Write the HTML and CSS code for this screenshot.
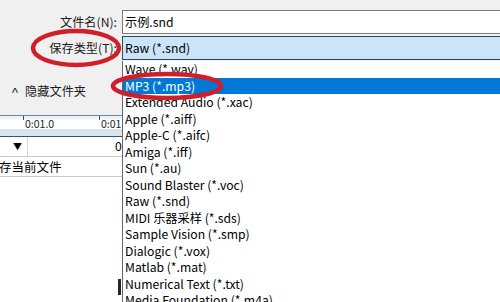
FILE: index.html
```html
<!DOCTYPE html>
<html>
<head>
  <meta charset="UTF-8">
  <title>保存文件</title>
  <link rel="stylesheet" href="styles.css">
</head>
<body>
  <div class="form">
    <div class="form-row">
      <label class="form-label">文件名(N):</label>
      <div class="text-field">示例.snd</div>
    </div>
    <div class="form-row">
      <label class="form-label">保存类型(T):</label>
      <div class="combo">Raw (*.snd)</div>
    </div>
  </div>

  <div class="folder-toggle">
    <span class="caret">^</span>
    <span>隐藏文件夹</span>
  </div>

  <div class="editor">
    <div class="ruler">
      <span class="tick">0:01.0</span>
      <span class="tick">0:01</span>
    </div>
    <div class="ruler-band"></div>
    <div class="track-row">
      <div class="track-arrow">▼</div>
      <div class="track-time">0</div>
    </div>
    <div class="track-row">
      <div class="track-name">存当前文件</div>
    </div>
    <div class="editor-rest">
      <div class="scroll-mark"></div>
    </div>
  </div>

  <!-- 下拉列表 -->
  <ul class="dropdown">
    <li>Wave (*.wav)</li>
    <li class="selected">MP3 (*.mp3)</li>
    <li>Extended Audio (*.xac)</li>
    <li>Apple (*.aiff)</li>
    <li>Apple-C (*.aifc)</li>
    <li>Amiga (*.iff)</li>
    <li>Sun (*.au)</li>
    <li>Sound Blaster (*.voc)</li>
    <li>Raw (*.snd)</li>
    <li>MIDI 乐器采样 (*.sds)</li>
    <li>Sample Vision (*.smp)</li>
    <li>Dialogic (*.vox)</li>
    <li>Matlab (*.mat)</li>
    <li>Numerical Text (*.txt)</li>
    <li>Media Foundation (*.m4a)</li>
  </ul>

  <!-- 红圈标注 -->
  <svg class="marks" width="500" height="302" viewBox="0 0 500 302">
    <ellipse cx="76" cy="48" rx="43" ry="17" fill="none" stroke="#d01f2b" stroke-width="4.5"/>
    <ellipse cx="167" cy="86" rx="54" ry="12" fill="none" stroke="#d01f2b" stroke-width="4.5"/>
  </svg>
</body>
</html>
```

FILE: styles.css
```css
:root {
  --ui-bg: #f0f0f0;
  --field-border: #7a7a7a;
  --combo-bg: #cce4f7;
  --combo-border: #2a4a63;
  --select-blue: #0078d7;
  --text-color: #000000;
  --label-color: #1b1b1b;
}

body {
  margin: 0;
  width: 500px;
  height: 302px;
  overflow: hidden;
  position: relative;
  background-color: var(--ui-bg);
  font-family: "Noto Sans CJK SC", sans-serif;
  font-size: 12.2px;
  color: var(--text-color);
}

.form {
  padding-top: 10px;
  display: flex;
  flex-direction: column;
  gap: 2px;
}

.form-row {
  display: flex;
  height: 24px;
}

.form-label {
  width: 122px;
  box-sizing: border-box;
  padding-right: 5px;
  text-align: right;
  line-height: 24px;
  color: var(--label-color);
}

.text-field {
  flex: 1;
  background-color: #ffffff;
  border: 1px solid var(--field-border);
  border-right: none;
  padding-left: 2px;
  line-height: 22px;
}

.combo {
  flex: 1;
  background-color: var(--combo-bg);
  border: 1px solid var(--combo-border);
  border-right: none;
  padding-left: 2px;
  line-height: 23px;
}

.folder-toggle {
  margin-top: 23px;
  height: 16px;
  line-height: 16px;
  display: flex;
  align-items: center;
  gap: 7px;
  padding-left: 12px;
  color: var(--label-color);
}

.caret {
  font-size: 11px;
  transform: scaleX(1.3);
}

/* 编辑器背景 */
.editor {
  margin-top: 16px;
  width: 122px;
  height: 200px;
  overflow: hidden;
  background-color: #ffffff;
}

.ruler {
  display: flex;
  height: 13px;
  padding-left: 23px;
  border-top: 1px solid #6f8aa3;
  background: linear-gradient(#e8edf1, #ffffff 40%);
}

.tick {
  width: 76px;
  flex-shrink: 0;
  height: 13px;
  font-size: 10.5px;
  line-height: 13px;
  padding: 1px 0 0 1px;
  color: #222222;
  box-sizing: border-box;
  white-space: nowrap;
  border-left: 1px solid #4a4a4a;
  border-image: linear-gradient(#4a4a4a 4px, transparent 4px) 1;
}

.tick:last-child {
  width: 22px;
}

.ruler-band {
  height: 7px;
  background-color: #d9e3ec;
  border-bottom: 1px solid #34536e;
}

.track-row {
  display: flex;
  height: 19px;
  border-bottom: 1px solid #c9c9c9;
  line-height: 19px;
}

.track-arrow {
  width: 28px;
  padding-right: 5px;
  box-sizing: border-box;
  text-align: right;
  font-size: 9px;
  border-right: 1px solid #d6d6d6;
}

.track-time {
  padding-left: 87px;
}

.track-name {
  font-size: 12.5px;
  margin-left: -1px;
}

.scroll-mark {
  margin: 102px 0 0 118px;
  width: 3px;
  height: 16px;
  background-color: #1d2a24;
}

.dropdown {
  position: absolute;
  left: 122px;
  top: 61px;
  right: 0;
  bottom: 0;
  margin: 0;
  padding: 0;
  list-style: none;
  background-color: #ffffff;
  border-left: 1px solid #5a6a78;
  overflow: hidden;
}

.dropdown li {
  height: 16.5px;
  line-height: 16.5px;
  padding-left: 2px;
  white-space: nowrap;
}

.dropdown li.selected {
  background-color: var(--select-blue);
  color: #ffffff;
}

.marks {
  position: absolute;
  left: 0;
  top: 0;
  pointer-events: none;
}
```
